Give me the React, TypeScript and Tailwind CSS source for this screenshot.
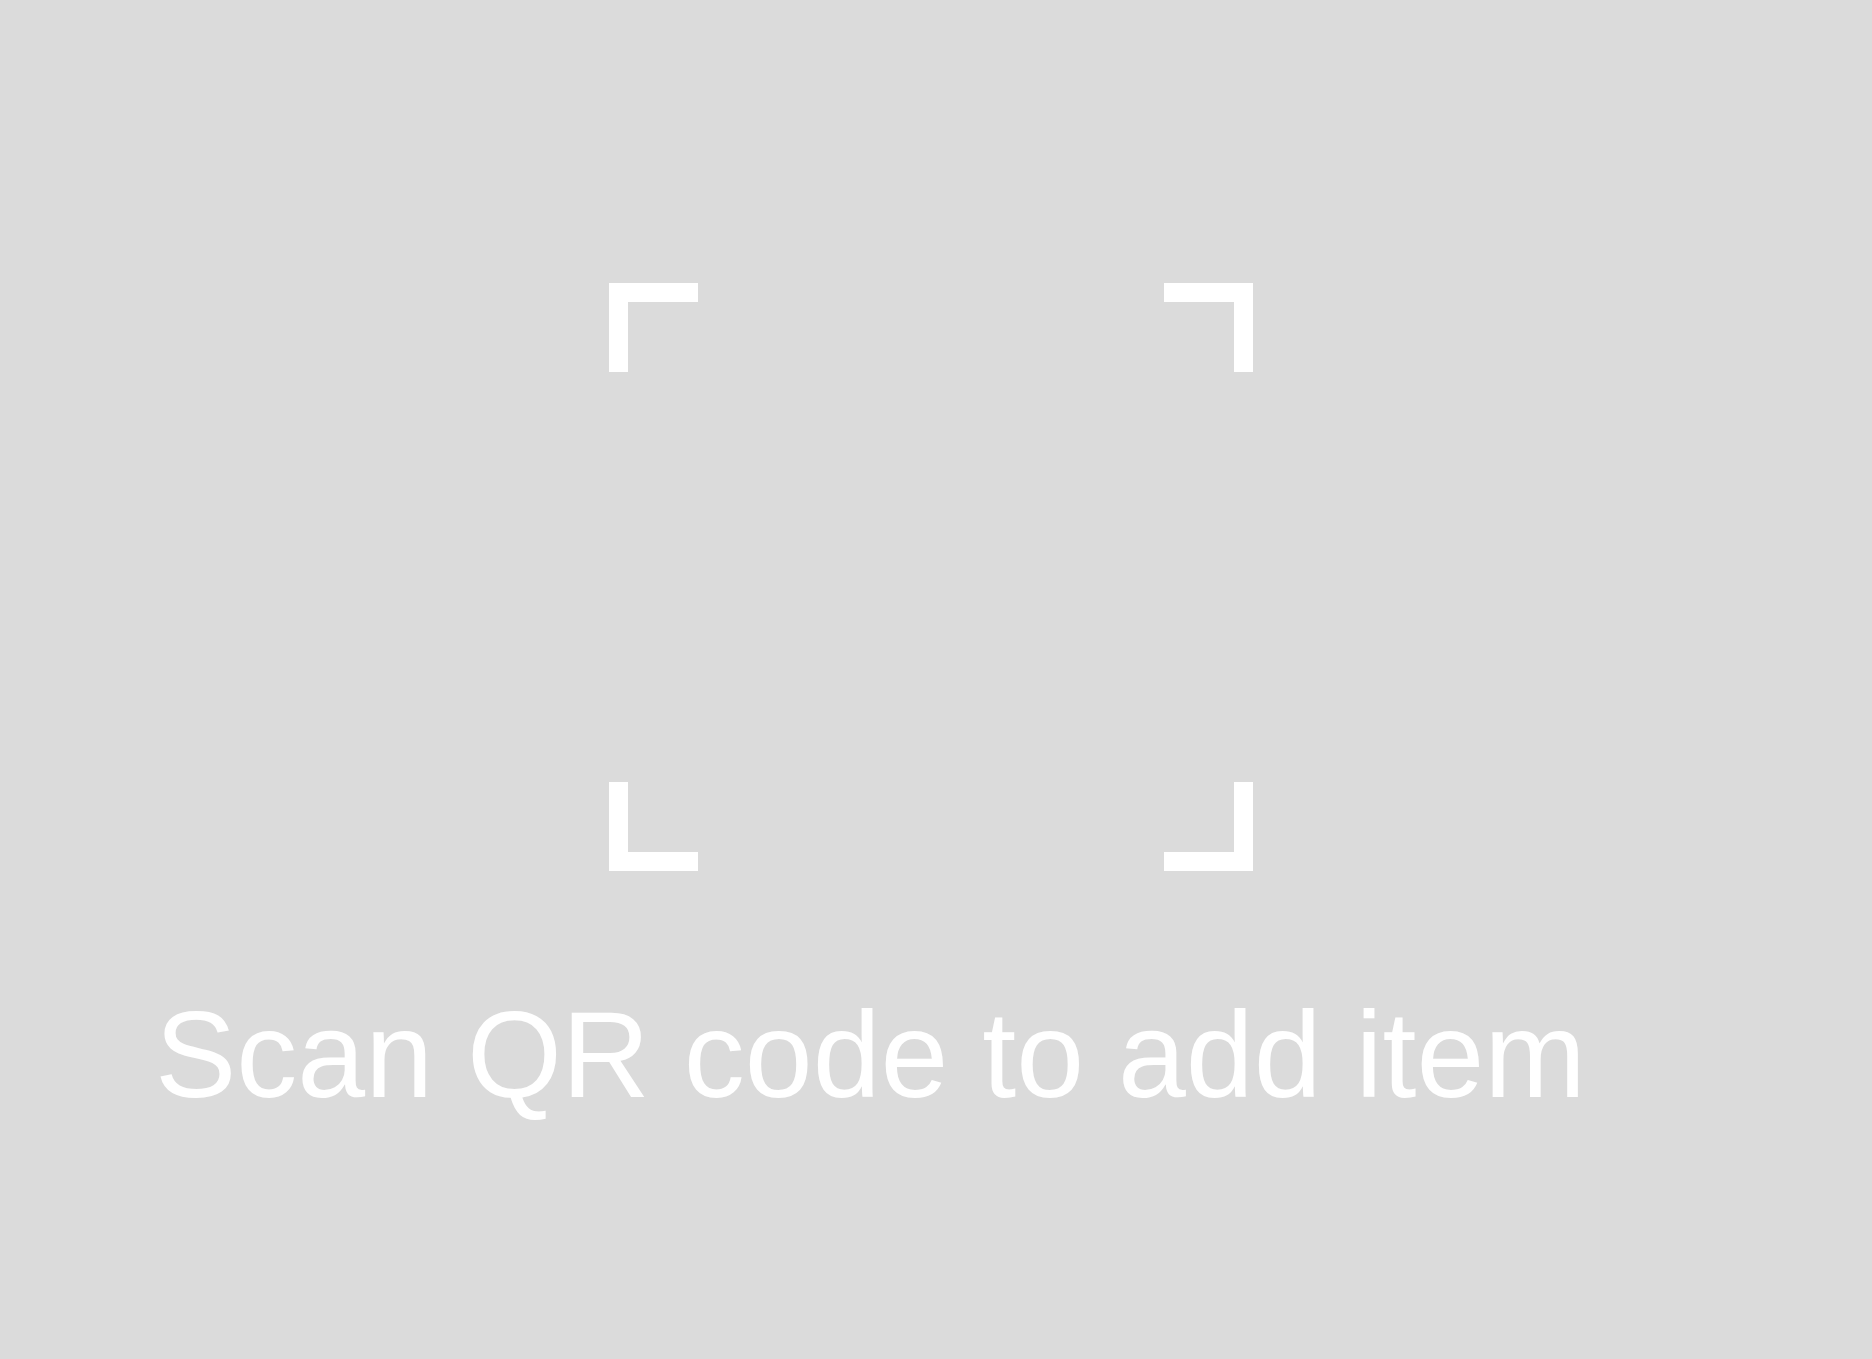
const corner = "size-[89px] border-white";

function ScanFrame() {
  return (
    <div
      role="img"
      aria-label="QR code scanning area"
      className="mr-[10px] flex h-[588px] w-[644px] max-w-full flex-col justify-between self-center"
    >
      <div className="flex justify-between">
        <span className={`${corner} border-t-[19px] border-l-[19px]`} />
        <span className={`${corner} border-t-[19px] border-r-[19px]`} />
      </div>
      <div className="flex justify-between">
        <span className={`${corner} border-b-[19px] border-l-[19px]`} />
        <span className={`${corner} border-b-[19px] border-r-[19px]`} />
      </div>
    </div>
  );
}

export default function App() {
  return (
    <main className="flex min-h-screen flex-col bg-[#dbdbdb] pt-[283px] font-['Helvetica_Neue','Liberation_Sans',Arial,sans-serif]">
      <ScanFrame />
      <p className="mt-[124px] pl-[155px] text-[122px] leading-[120px] text-white">
        Scan QR code to add item
      </p>
    </main>
  );
}
